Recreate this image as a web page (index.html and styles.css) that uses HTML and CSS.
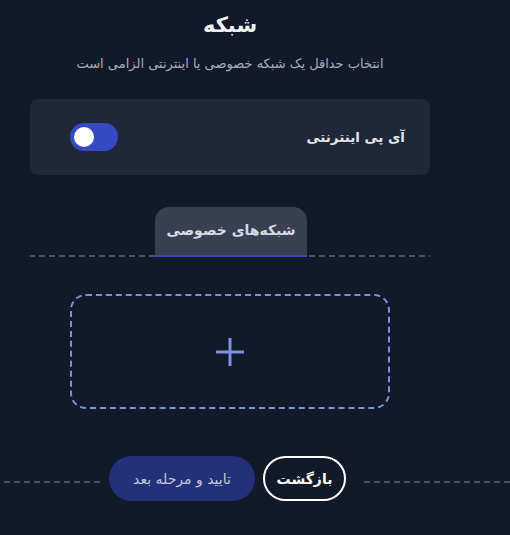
FILE: index.html
```html
<!DOCTYPE html>
<html lang="fa" dir="rtl">
<head>
    <meta charset="UTF-8">
    <meta name="viewport" content="width=device-width, initial-scale=1.0">
    <title>شبکه</title>
    <link rel="stylesheet" href="styles.css">
</head>
<body>
    <div class="container">
        <h2 class="title">شبکه</h2>
        <p class="subtitle">انتخاب حداقل یک شبکه خصوصی یا اینترنتی الزامی است</p>

        <div class="card">
            <span class="card-label">آی پی اینترنتی</span>
            <label class="switch">
                <span class="knob"></span>
            </label>
        </div>

        <div class="tabs">
            <div class="tab active">شبکه‌های خصوصی</div>
        </div>

        <div class="add-box">
            <svg width="28" height="28" viewBox="0 0 28 28">
                <path d="M14 0 V28 M0 14 H28" stroke="#7f8ee0" stroke-width="3"/>
            </svg>
        </div>
    </div>

    <div class="footer">
        <span class="line line-right"></span>
        <button class="btn btn-back">بازگشت</button>
        <button class="btn btn-next">تایید و مرحله بعد</button>
        <span class="line line-left"></span>
    </div>
</body>
</html>
```

FILE: styles.css
```css
body {
    margin: 0;
    background: #121a29;
    font-family: "DejaVu Sans", "Noto Sans", sans-serif;
    color: #e5e7eb;
}
.container {
    width: 400px;
    margin-right: 80px;
    padding-top: 8px;
}
.title {
    margin: 0;
    text-align: center;
    font-size: 21px;
    font-weight: bold;
    color: #f1f2f6;
    line-height: 34px;
}
.subtitle {
    margin: 12px 0 0;
    text-align: center;
    font-size: 13px;
    color: #a7aebb;
    line-height: 20px;
}
.card {
    margin-top: 25px;
    height: 76px;
    background: #1f2837;
    border-radius: 8px;
    display: flex;
    align-items: center;
    justify-content: space-between;
    padding: 0 25px 0 40px;
}
.card-label {
    font-size: 13.5px;
    font-weight: bold;
    color: #e3e5ea;
}
.switch {
    width: 48px;
    height: 28px;
    border-radius: 14px;
    background: #3549c2;
    display: flex;
    align-items: center;
    justify-content: flex-end;
    padding: 0 4px;
    box-sizing: border-box;
}
.knob {
    width: 20px;
    height: 20px;
    border-radius: 50%;
    background: #fff;
}
.tabs {
    margin-top: 32px;
    display: flex;
    justify-content: center;
    background-image: linear-gradient(to left, #485161 6px, transparent 6px);
    background-size: 10px 2px;
    background-repeat: repeat-x;
    background-position: bottom;
}
.tab {
    width: 152px;
    height: 50px;
    margin-left: 2px;
    box-sizing: border-box;
    background: #374151;
    border-radius: 14px 14px 0 0;
    border-bottom: 2px solid #3346c0;
    text-align: center;
    line-height: 46px;
    font-size: 14px;
    font-weight: bold;
    color: #d6dae2;
}
.add-box {
    width: 320px;
    height: 115px;
    margin: 37px 40px 0 0;
    box-sizing: border-box;
    border: 2px dashed #7f8ee0;
    border-radius: 16px;
    display: flex;
    align-items: center;
    justify-content: center;
}
.footer {
    margin-top: 47px;
    display: flex;
    align-items: center;
}
.line {
    height: 2px;
    margin-top: 7px;
    background-image: linear-gradient(to left, #485161 6px, transparent 6px);
    background-size: 10px 2px;
}
.line-right {
    flex: 1;
    margin-left: 14px;
}
.line-left {
    width: 100px;
    margin-right: 9px;
}
.btn {
    height: 45px;
    border-radius: 23px;
    font-family: inherit;
    font-size: 14px;
    cursor: pointer;
}
.btn-back {
    width: 83px;
    background: transparent;
    border: 2px solid #fff;
    color: #fff;
    font-weight: bold;
}
.btn-next {
    width: 146px;
    margin-right: 8px;
    background: #23307a;
    border: none;
    color: #c4c8dc;
}
```
